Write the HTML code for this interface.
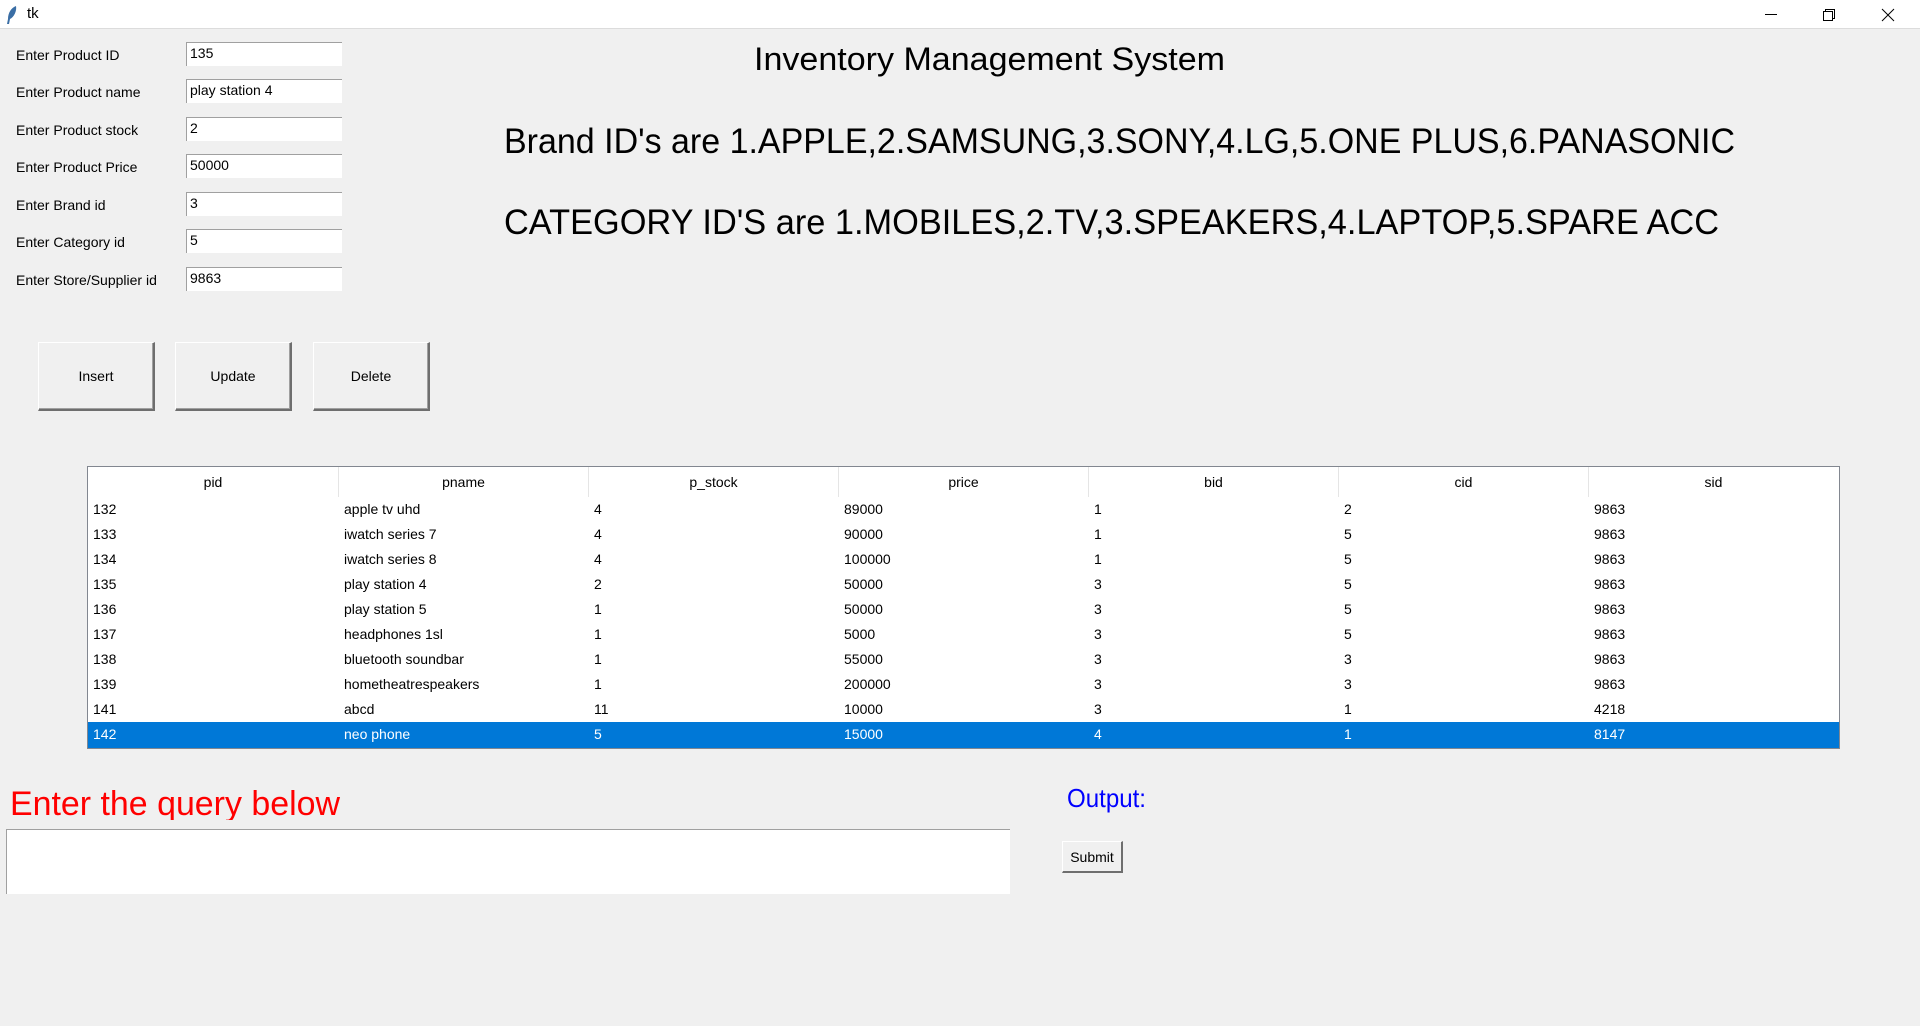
<!DOCTYPE html>
<html><head><meta charset="utf-8"><style>
*{margin:0;padding:0;box-sizing:border-box}
body{width:1920px;height:1026px;background:#f0f0f0;position:relative;overflow:hidden;font-family:"Liberation Sans",sans-serif;color:#000}
.a{position:absolute;white-space:nowrap}
.tb{position:absolute;left:0;top:0;width:1920px;height:29px;background:#fff;border-bottom:1px solid #dcdcdc}
.lbl{position:absolute;left:16px;font-size:14px;line-height:20px}
.ent{position:absolute;left:186px;width:156px;height:24px;background:#fff;border-top:1px solid #a0a0a0;border-left:1px solid #a0a0a0;font-size:14px;line-height:21px;padding-left:3px}
.btn{position:absolute;top:342px;width:117px;height:69px;background:#f0f0f0;border:1px solid #fff;border-right:2px solid #6e6e6e;border-bottom:2px solid #6e6e6e;box-shadow:inset -1px -1px 0 #a0a0a0;font-size:14px;display:flex;align-items:center;justify-content:center}
.tbl{position:absolute;left:87px;top:466px;width:1753px;height:283px;border:1px solid #828790;background:#fff}
.row{position:absolute;left:0;width:1751px;height:25px;font-size:14px;line-height:25px}
.row span{position:absolute}
.hd span{text-align:center;width:250px}
</style></head><body>
<div class="tb">
<svg class="a" style="left:6px;top:5px" width="12" height="20" viewBox="0 0 12 20"><path d="M10 1 C5 3 2 8 2 14 L1 19 L3 19 L4 14 C8 12 11 6 10 1Z" fill="#3a6ea5"/></svg>
<div class="a" style="left:27px;top:5px;font-size:15px">tk</div>
<svg class="a" style="left:1763px;top:8px" width="140" height="14"><path d="M2 6.5H14" stroke="#000" stroke-width="1"/><rect x="60.5" y="3.5" width="9" height="9" fill="none" stroke="#000"/><path d="M62.5 3.5V1.5H71.5V10.5H69.5" fill="none" stroke="#000"/><path d="M119 1L131 13M131 1L119 13" stroke="#000"/></svg>
</div>

<div class="lbl" style="top:45px">Enter Product ID</div>
<div class="lbl" style="top:82px">Enter Product name</div>
<div class="lbl" style="top:120px">Enter Product stock</div>
<div class="lbl" style="top:157px">Enter Product Price</div>
<div class="lbl" style="top:195px">Enter Brand id</div>
<div class="lbl" style="top:232px">Enter Category id</div>
<div class="lbl" style="top:270px">Enter Store/Supplier id</div>

<div class="ent" style="top:42px">135</div>
<div class="ent" style="top:79px">play station 4</div>
<div class="ent" style="top:117px">2</div>
<div class="ent" style="top:154px">50000</div>
<div class="ent" style="top:192px">3</div>
<div class="ent" style="top:229px">5</div>
<div class="ent" style="top:267px">9863</div>

<svg class="a" style="left:0;top:30px" width="1920" height="220">
<text x="754" y="40" font-family="Liberation Sans" font-size="32" textLength="471" lengthAdjust="spacingAndGlyphs">Inventory Management System</text>
<text x="504" y="123" font-family="Liberation Sans" font-size="35" textLength="1231" lengthAdjust="spacingAndGlyphs">Brand ID's are 1.APPLE,2.SAMSUNG,3.SONY,4.LG,5.ONE PLUS,6.PANASONIC</text>
<text x="504" y="204" font-family="Liberation Sans" font-size="35" textLength="1215" lengthAdjust="spacingAndGlyphs">CATEGORY ID'S are 1.MOBILES,2.TV,3.SPEAKERS,4.LAPTOP,5.SPARE ACC</text>
</svg>

<div class="btn" style="left:38px">Insert</div>
<div class="btn" style="left:175px">Update</div>
<div class="btn" style="left:313px">Delete</div>

<div class="tbl">
<div class="row hd" style="top:0;height:30px;line-height:30px">
<span style="left:0">pid</span><span style="left:250px;border-left:1px solid #e5e5e5">pname</span><span style="left:500px;border-left:1px solid #e5e5e5">p_stock</span><span style="left:750px;border-left:1px solid #e5e5e5">price</span><span style="left:1000px;border-left:1px solid #e5e5e5">bid</span><span style="left:1250px;border-left:1px solid #e5e5e5">cid</span><span style="left:1500px;border-left:1px solid #e5e5e5">sid</span>
</div>
<div class="row" style="top:30px"><span style="left:5px">132</span><span style="left:256px">apple tv uhd</span><span style="left:506px">4</span><span style="left:756px">89000</span><span style="left:1006px">1</span><span style="left:1256px">2</span><span style="left:1506px">9863</span></div>
<div class="row" style="top:55px"><span style="left:5px">133</span><span style="left:256px">iwatch series 7</span><span style="left:506px">4</span><span style="left:756px">90000</span><span style="left:1006px">1</span><span style="left:1256px">5</span><span style="left:1506px">9863</span></div>
<div class="row" style="top:80px"><span style="left:5px">134</span><span style="left:256px">iwatch series 8</span><span style="left:506px">4</span><span style="left:756px">100000</span><span style="left:1006px">1</span><span style="left:1256px">5</span><span style="left:1506px">9863</span></div>
<div class="row" style="top:105px"><span style="left:5px">135</span><span style="left:256px">play station 4</span><span style="left:506px">2</span><span style="left:756px">50000</span><span style="left:1006px">3</span><span style="left:1256px">5</span><span style="left:1506px">9863</span></div>
<div class="row" style="top:130px"><span style="left:5px">136</span><span style="left:256px">play station 5</span><span style="left:506px">1</span><span style="left:756px">50000</span><span style="left:1006px">3</span><span style="left:1256px">5</span><span style="left:1506px">9863</span></div>
<div class="row" style="top:155px"><span style="left:5px">137</span><span style="left:256px">headphones 1sl</span><span style="left:506px">1</span><span style="left:756px">5000</span><span style="left:1006px">3</span><span style="left:1256px">5</span><span style="left:1506px">9863</span></div>
<div class="row" style="top:180px"><span style="left:5px">138</span><span style="left:256px">bluetooth soundbar</span><span style="left:506px">1</span><span style="left:756px">55000</span><span style="left:1006px">3</span><span style="left:1256px">3</span><span style="left:1506px">9863</span></div>
<div class="row" style="top:205px"><span style="left:5px">139</span><span style="left:256px">hometheatrespeakers</span><span style="left:506px">1</span><span style="left:756px">200000</span><span style="left:1006px">3</span><span style="left:1256px">3</span><span style="left:1506px">9863</span></div>
<div class="row" style="top:230px"><span style="left:5px">141</span><span style="left:256px">abcd</span><span style="left:506px">11</span><span style="left:756px">10000</span><span style="left:1006px">3</span><span style="left:1256px">1</span><span style="left:1506px">4218</span></div>
<div class="row" style="top:255px;height:26px;background:#0078d7;color:#fff"><span style="left:5px">142</span><span style="left:256px">neo phone</span><span style="left:506px">5</span><span style="left:756px">15000</span><span style="left:1006px">4</span><span style="left:1256px">1</span><span style="left:1506px">8147</span></div>
</div>

<svg class="a" style="left:0;top:770px" width="1200" height="50">
<text x="10" y="45" font-family="Liberation Sans" font-size="34" fill="#ff0000" textLength="330" lengthAdjust="spacingAndGlyphs">Enter the query below</text>
<text x="1067" y="37" font-family="Liberation Sans" font-size="26" fill="#0000ff" textLength="79" lengthAdjust="spacingAndGlyphs">Output:</text>
</svg>
<div class="a" style="left:6px;top:829px;width:1004px;height:65px;background:#fff;border-top:1px solid #a0a0a0;border-left:1px solid #a0a0a0"></div>
<div class="a" style="left:1062px;top:841px;width:61px;height:32px;background:#f0f0f0;border:1px solid #fff;border-right:2px solid #6e6e6e;border-bottom:2px solid #6e6e6e;font-size:14px;display:flex;align-items:center;justify-content:center">Submit</div>
</body></html>
